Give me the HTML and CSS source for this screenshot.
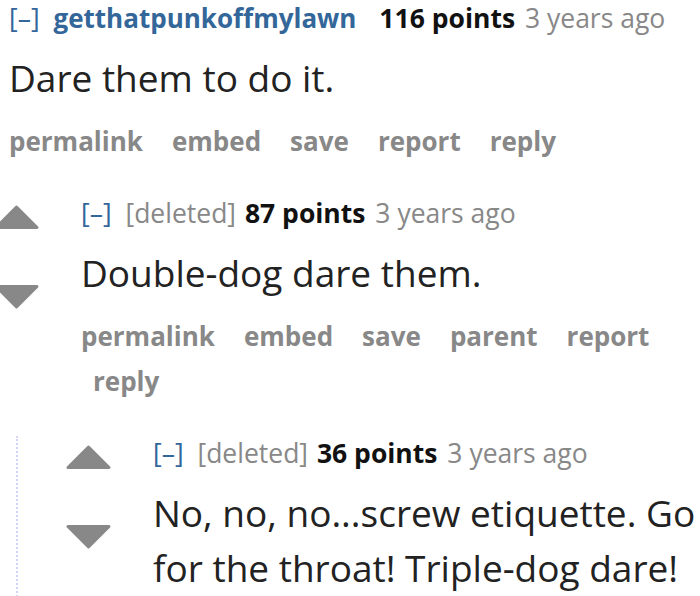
FILE: index.html
```html
<!DOCTYPE html>
<html lang="en">
<head>
    <meta charset="UTF-8">
    <meta name="viewport" content="width=device-width, initial-scale=1.0">
    <title>Comments</title>
    <link rel="stylesheet" href="styles.css">
</head>
<body>

<div class="sitetable">
    <div class="comment">
        <div class="row">
            <div class="midcol">
                <svg class="arrow" viewBox="0 0 45 25"><polygon points="22.5,2 43,22.5 2,22.5"/></svg>
                <svg class="arrow" viewBox="0 0 45 25"><polygon points="2,2.5 43,2.5 22.5,23"/></svg>
            </div>
            <div class="entry">
                <p class="tagline">
                    <a class="expand" href="#">[–]</a>
                    <a class="author" href="#">getthatpunkoffmylawn</a>
                    <span class="score">116 points</span>
                    <time>3 years ago</time>
                </p>
                <div class="md"><p>Dare them to do it.</p></div>
                <ul class="buttons">
                    <li class="first"><a href="#">permalink</a></li>
                    <li><a href="#">embed</a></li>
                    <li><a href="#">save</a></li>
                    <li><a href="#">report</a></li>
                    <li><a href="#">reply</a></li>
                </ul>
            </div>
        </div>

        <div class="child">
            <div class="comment">
                <div class="row">
                    <div class="midcol">
                        <svg class="arrow" viewBox="0 0 45 25"><polygon points="22.5,2 43,22.5 2,22.5"/></svg>
                        <svg class="arrow" viewBox="0 0 45 25"><polygon points="2,2.5 43,2.5 22.5,23"/></svg>
                    </div>
                    <div class="entry">
                        <p class="tagline">
                            <a class="expand" href="#">[–]</a>
                            <em class="deleted">[deleted]</em>
                            <span class="score">87 points</span>
                            <time>3 years ago</time>
                        </p>
                        <div class="md"><p>Double-dog dare them.</p></div>
                        <ul class="buttons">
                            <li class="first"><a href="#">permalink</a></li>
                            <li><a href="#">embed</a></li>
                            <li><a href="#">save</a></li>
                            <li><a href="#">parent</a></li>
                            <li><a href="#">report</a></li>
                            <li><a href="#">reply</a></li>
                        </ul>
                    </div>
                </div>

                <div class="child">
                    <div class="comment">
                        <div class="row">
                            <div class="midcol">
                                <svg class="arrow" viewBox="0 0 45 25"><polygon points="22.5,2 43,22.5 2,22.5"/></svg>
                                <svg class="arrow" viewBox="0 0 45 25"><polygon points="2,2.5 43,2.5 22.5,23"/></svg>
                            </div>
                            <div class="entry">
                                <p class="tagline">
                                    <a class="expand" href="#">[–]</a>
                                    <em class="deleted">[deleted]</em>
                                    <span class="score">36 points</span>
                                    <time>3 years ago</time>
                                </p>
                                <div class="md"><p>No, no, no...screw etiquette. Go for the throat! Triple-dog dare!</p></div>
                            </div>
                        </div>
                    </div>
                </div>
            </div>
        </div>
    </div>
</div>

</body>
</html>
```

FILE: styles.css
```css
/* Page */
body {
    margin: 0;
    padding-top: 1px;
    background: #fff;
    font-family: 'Open Sans', 'Noto Sans', sans-serif;
    color: #222;
    overflow: hidden;
}

a {
    text-decoration: none;
}

/* the thread is scrolled, the top level vote arrows sit off screen */
.sitetable {
    margin-left: -78px;
}

/* Comment layout */
.row {
    display: flex;
    align-items: flex-start;
    gap: 42px;
}

.midcol {
    flex: none;
    width: 45px;
    padding-top: 9px;
    display: flex;
    flex-direction: column;
    gap: 54px;
}

.arrow {
    display: block;
    width: 45px;
    height: 25px;
}

.arrow polygon {
    fill: #888;
    stroke: #888;
    stroke-width: 3;
    stroke-linejoin: round;
}

.entry {
    flex: 1;
    min-width: 0;
}

/* Tagline */
.tagline {
    margin: 0;
    font-size: 26.5px;
    line-height: 34px;
    color: #888;
    white-space: nowrap;
}

.tagline .expand {
    color: #369;
    margin-right: 7px;
}

.tagline .author {
    color: #369;
    font-size: 26px;
    font-weight: bold;
    margin-right: 16px;
}

.tagline .deleted {
    font-style: normal;
    color: #888;
    margin-right: 2px;
}

.tagline .score {
    color: #111;
    font-weight: bold;
    margin-right: 3px;
}

/* Comment body */
.md {
    margin: 15px 0 14px;
    font-size: 37px;
    line-height: 55px;
    color: #222;
}

.md p {
    margin: 0;
}

/* Buttons */
.buttons {
    list-style: none;
    margin: 0;
    padding: 0;
    display: flex;
    flex-wrap: wrap;
    font-size: 26px;
    line-height: 45px;
    font-weight: bold;
}

.buttons li {
    padding: 0 17px 0 12px;
}

.buttons li.first {
    padding-left: 0;
}

.buttons a {
    color: #888;
}

/* Nested replies */
.child {
    margin: 32px 0 0 22px;
    padding-left: 48px;
    border-left: 2px dotted #d4d4f6;
}
```
